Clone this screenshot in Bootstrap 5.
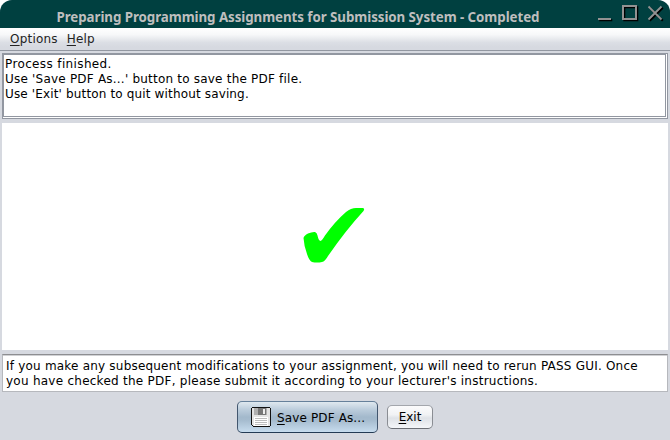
<!DOCTYPE html>
<html lang="en">
<head>
<meta charset="utf-8">
<meta name="viewport" content="width=device-width, initial-scale=1">
<title>Preparing Programming Assignments for Submission System - Completed</title>
<link href="https://cdn.jsdelivr.net/npm/bootstrap@5.3.0/dist/css/bootstrap.min.css" rel="stylesheet">
<style>
body{background:#fff;font:12px/15px "DejaVu Sans",sans-serif;color:#000}
.app-window{width:670px;height:440px;background:#d6d9e0;border-radius:12px 12px 0 0}
.title-bar{height:28px;background:#004040;color:#bebebe;font:bold 13.33px/18px "Noto Sans",sans-serif;padding:8px 0 0 56.5px}
.title-bar h1{font:inherit;width:484px;letter-spacing:-.062px}
.win-controls{width:74px;height:28px;margin-top:-8px}
.menu-bar{height:23px;background:linear-gradient(#fff 0,#f7f8f9 30%,#dcdfe5 65%,#d6d9e0 85%);border-bottom:1px solid #9297a1;padding:4px 0 0 10px;gap:9px;color:#232323;letter-spacing:.2px}
.menu-bar a{color:inherit;text-decoration:none}
u{text-underline-offset:2px;text-decoration-thickness:1px}
.log-frame{margin:2px 2px 4px;height:66px;border:1px solid #9297a1;background:#fff;padding:0 1px 1px 0;letter-spacing:.21px}
.log-frame .line:first-child{letter-spacing:.37px}
.log-frame .line:last-child{letter-spacing:.15px}
.log-text{height:63px;border:1px solid #9297a1;padding:2px 0 0 1px}
.result-pane{margin:0 2px;height:227px;background:#fff}
.hint-box{margin:4px 2px 0;height:38px;background:#fff;border:1px solid #b6b8bd;border-top:1px solid #8d8e91;box-shadow:inset 0 1px #d0d1d4;padding:4px 0 0 3px;letter-spacing:.205px}
.hint-box .line+.line{letter-spacing:.255px}
.line{white-space:nowrap}
.action-row{gap:9px;margin-top:9px}
.action-row .btn{font:inherit;color:#000;padding:0;border-radius:5px}
.action-row .btn-save{width:141px;height:32px;border:1px solid #42566e;border-color:#66809a #42566e #243b54;background:linear-gradient(#dfe8ef 0,#bccddc 25%,#a3b9cc 50%,#a5bbce 60%,#c7dcee 100%);gap:6px;letter-spacing:.13px;padding-left:13px}
.action-row .btn-save span{padding-top:2px}
.action-row .btn-exit{width:46px;height:24px;margin-top:4px;border:1px solid #8a8d93;border-color:#a3a6ac #8a8d93 #6c6f76;background:linear-gradient(#fbfbfc 0,#f1f2f4 40%,#dfe2e7 55%,#f4f6f9 100%)}
</style>
</head>
<body>
<main class="app-window overflow-hidden d-flex flex-column">
  <header class="title-bar d-flex justify-content-between">
    <h1 class="m-0 line">Preparing Programming Assignments for Submission System - Completed</h1>
    <svg class="win-controls" viewBox="596 0 74 28" fill="none" aria-hidden="true">
      <g stroke="#000" stroke-width="2" transform="translate(1.300 1.300)"><path d="M598 19h13M623 6h13v13h-13zM648.500 6.500l13 13M661.500 6.500l-13 13"/></g>
      <g stroke="#929292" stroke-width="2"><path d="M598 19h13M623 6h13v13h-13z"/><path d="M648.500 6.500l13 13M661.500 6.500l-13 13" stroke-width="1.800"/></g>
    </svg>
  </header>
  <nav class="menu-bar d-flex">
    <a href="#"><u>O</u>ptions</a>
    <a href="#"><u>H</u>elp</a>
  </nav>
  <section class="log-frame">
    <div class="log-text">
      <div class="line">Process finished.</div>
      <div class="line">Use 'Save PDF As...' button to save the PDF file.</div>
      <div class="line">Use 'Exit' button to quit without saving.</div>
    </div>
  </section>
  <section class="result-pane">
    <svg class="d-block" width="666" height="227" viewBox="2 123 666 227" role="img" aria-label="Completed">
      <path fill="#0f0" d="M303.500 238Q304 235.500 308 233.500Q312 231.700 315 232Q317 232.500 317.500 235.500Q318.500 240.500 320.500 241Q322 240.500 325 235.500Q335 221.500 346 212Q351 208 356 208L363 208Q365 208.500 363.500 211Q346 230 328 256Q325 261.500 322 262Q317 263 312 262Q309 260.500 307 254Q304 246 303.500 238Z"/>
    </svg>
  </section>
  <section class="hint-box">
    <div class="line">If you make any subsequent modifications to your assignment, you will need to rerun PASS GUI. Once</div>
    <div class="line">you have checked the PDF, please submit it according to your lecturer's instructions.</div>
  </section>
  <footer class="action-row d-flex justify-content-center align-items-start">
    <button type="button" class="btn btn-save d-flex align-items-center">
      <svg class="flex-shrink-0" width="20" height="20" viewBox="0 0 20 20" shape-rendering="crispEdges" aria-hidden="true">
        <path fill="#111" d="M1 0h18v1h1v18h-1v1H2v-1H1v-1H0V1h1z"/>
        <path fill="#e4e4e4" d="M1 1h18v18H2v-1H1z"/>
        <path fill="#b0b0b0" d="M3 1h13v7H3z"/>
        <path fill="#777" d="M7 1h8v7H7z"/><path fill="#eee" d="M12 2h2v5h-2z"/>
        <path fill="#fff" d="M3 10h14v9H3z"/>
        <path fill="#bcbcbc" d="M4 11h12v1H4zM4 13h12v1H4zM4 15h12v1H4zM4 17h12v1H4z"/>
      </svg>
      <span><u>S</u>ave PDF As...</span>
    </button>
    <button type="button" class="btn btn-exit"><u>E</u>xit</button>
  </footer>
</main>
<script src="https://cdn.jsdelivr.net/npm/bootstrap@5.3.0/dist/js/bootstrap.bundle.min.js"></script>
</body>
</html>
